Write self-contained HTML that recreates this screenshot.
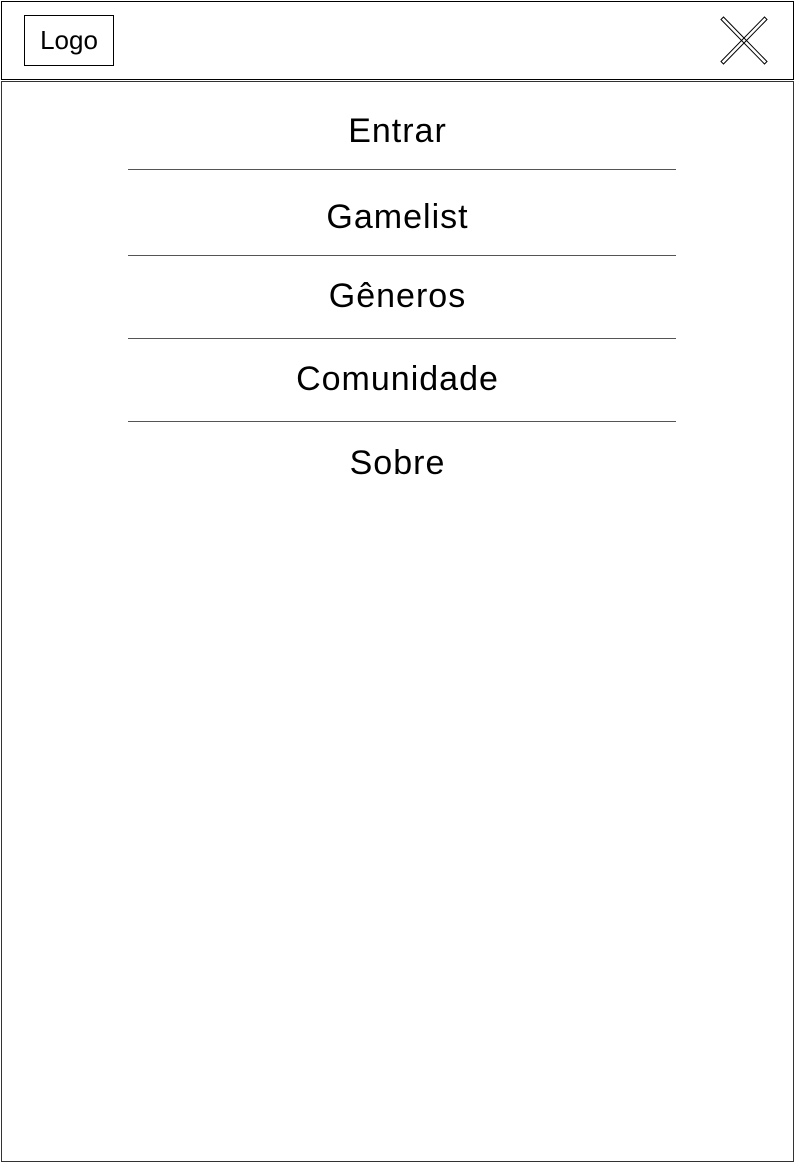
<!DOCTYPE html>
<html><head><meta charset="utf-8"><style>
body{margin:0;width:795px;height:1163px;background:#fff;position:relative;font-family:"Liberation Sans",sans-serif;overflow:hidden}
.b{position:absolute;border:1px solid #000;box-sizing:border-box}
.t{position:absolute;left:0;width:795px;text-align:center;font-size:34px;letter-spacing:1px;color:#000;line-height:40px}
.l{position:absolute;left:128px;width:548px;height:1px;background:#555}
</style></head><body>
<div class="b" style="left:1px;top:1px;width:793px;height:79px;"></div>
<div class="b" style="left:1px;top:81px;width:793px;height:1081px;border-color:#333"></div>
<div class="b" style="left:24px;top:15px;width:90px;height:51px;font-size:26px;text-align:center;line-height:48px;">Logo</div>
<svg style="position:absolute;left:716px;top:14px" width="56" height="54">
<g fill="none" stroke="#000" stroke-width="1">
<path d="M5 5.5 L7.5 3 L51 47.5 L48.5 50 Z"/>
<path d="M48.5 3 L51 5.5 L7.5 50 L5 47.5 Z"/>
</g></svg>
<div class="t" style="top:111px">Entrar</div>
<div class="l" style="top:169px"></div>
<div class="t" style="top:197px">Gamelist</div>
<div class="l" style="top:255px"></div>
<div class="t" style="top:276px">Gêneros</div>
<div class="l" style="top:338px"></div>
<div class="t" style="top:359px">Comunidade</div>
<div class="l" style="top:421px"></div>
<div class="t" style="top:443px">Sobre</div>
</body></html>
